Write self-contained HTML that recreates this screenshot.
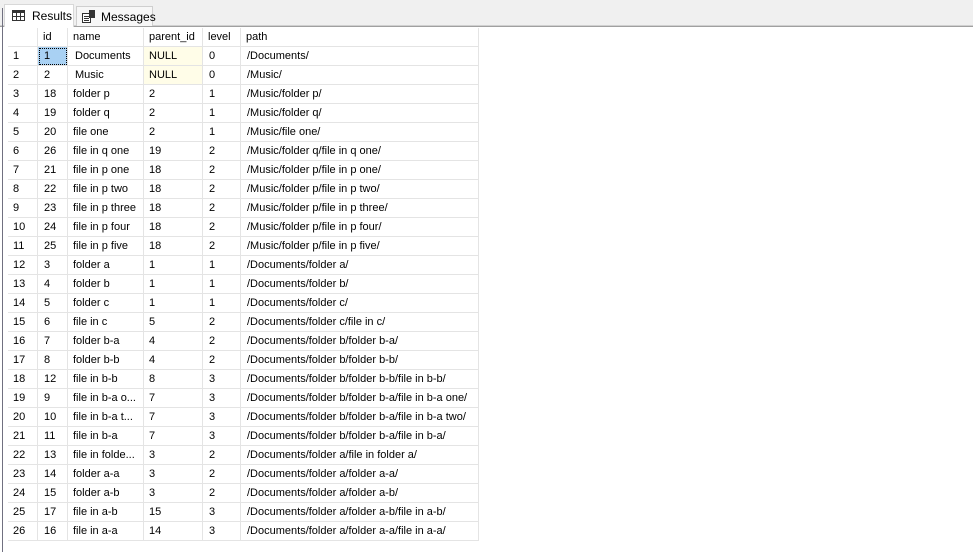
<!DOCTYPE html>
<html><head><style>
body{margin:0;width:973px;height:552px;background:#fff;font-family:"Liberation Sans",sans-serif;font-size:11px;color:#000;position:relative;overflow:hidden}
.strip{position:absolute;left:0;top:0;width:973px;height:25px;background:#f0f0f0}
.l1{position:absolute;left:0;top:25px;width:973px;height:1px;background:#d0d0d0}
.l2{position:absolute;left:0;top:26px;width:973px;height:1px;background:#a0a0a0}
.vl{position:absolute;left:2px;top:8px;width:1px;height:544px;background:#707080}
.tab{position:absolute;box-sizing:border-box;font-size:12px}
.t1{left:4px;top:4px;width:70px;height:23px;background:#fff;border:1px solid #d8d8d8;border-bottom:none}
.t2{left:76px;top:6px;width:77px;height:20px;background:#f7f7f7;border:1px solid #cfcfcf;border-bottom:none}
.c{position:absolute;box-sizing:border-box;border-right:1px solid #e4e4e4;border-bottom:1px solid #e4e4e4;padding-left:5px;line-height:18px;white-space:nowrap;overflow:hidden}
</style></head><body>
<div class="strip"></div><div class="l1"></div><div class="l2"></div><div class="vl"></div>
<div class="tab t1"><svg style="position:absolute;left:7px;top:5px" width="13" height="11"><rect x="0.5" y="0.5" width="12" height="10" fill="none" stroke="#333"/><rect x="0" y="0" width="13" height="3" fill="#333"/><line x1="4.5" y1="0" x2="4.5" y2="11" stroke="#333"/><line x1="8.5" y1="0" x2="8.5" y2="11" stroke="#333"/><line x1="0" y1="6.5" x2="13" y2="6.5" stroke="#333"/></svg><span style="position:absolute;left:27px;top:4px">Results</span></div>
<div class="tab t2"><svg style="position:absolute;left:5px;top:3px" width="14" height="13"><rect x="0.5" y="3.5" width="8" height="9" fill="#fff" stroke="#333"/><line x1="2" y1="6.5" x2="7" y2="6.5" stroke="#333"/><line x1="2" y1="8.5" x2="7" y2="8.5" stroke="#333"/><line x1="2" y1="10.5" x2="7" y2="10.5" stroke="#333"/><rect x="7" y="0" width="6" height="8" fill="#333"/></svg><span style="position:absolute;left:24px;top:3px">Messages</span></div>
<div id="g"></div>
<script>
var X=[8,38,68,144,203,241,479];
var H=["","id","name","parent_id","level","path"];
var D=[[1,"Documents","NULL",0,"/Documents/"],[2,"Music","NULL",0,"/Music/"],[18,"folder p",2,1,"/Music/folder p/"],[19,"folder q",2,1,"/Music/folder q/"],[20,"file one",2,1,"/Music/file one/"],[26,"file in q one",19,2,"/Music/folder q/file in q one/"],[21,"file in p one",18,2,"/Music/folder p/file in p one/"],[22,"file in p two",18,2,"/Music/folder p/file in p two/"],[23,"file in p three",18,2,"/Music/folder p/file in p three/"],[24,"file in p four",18,2,"/Music/folder p/file in p four/"],[25,"file in p five",18,2,"/Music/folder p/file in p five/"],[3,"folder a",1,1,"/Documents/folder a/"],[4,"folder b",1,1,"/Documents/folder b/"],[5,"folder c",1,1,"/Documents/folder c/"],[6,"file in c",5,2,"/Documents/folder c/file in c/"],[7,"folder b-a",4,2,"/Documents/folder b/folder b-a/"],[8,"folder b-b",4,2,"/Documents/folder b/folder b-b/"],[12,"file in b-b",8,3,"/Documents/folder b/folder b-b/file in b-b/"],[9,"file in b-a o...",7,3,"/Documents/folder b/folder b-a/file in b-a one/"],[10,"file in b-a t...",7,3,"/Documents/folder b/folder b-a/file in b-a two/"],[11,"file in b-a",7,3,"/Documents/folder b/folder b-a/file in b-a/"],[13,"file in folde...",3,2,"/Documents/folder a/file in folder a/"],[14,"folder a-a",3,2,"/Documents/folder a/folder a-a/"],[15,"folder a-b",3,2,"/Documents/folder a/folder a-b/"],[17,"file in a-b",15,3,"/Documents/folder a/folder a-b/file in a-b/"],[16,"file in a-a",14,3,"/Documents/folder a/folder a-a/file in a-a/"]];
var h="";
function cell(i,top,ht,txt,st){h+='<div class="c" style="left:'+X[i]+'px;top:'+top+'px;width:'+(X[i+1]-X[i])+'px;height:'+ht+'px;'+(st||'')+'">'+txt+'</div>';}
for(var i=0;i<6;i++)cell(i,28,19,H[i]);
for(var r=0;r<26;r++){var t=47+r*19,d=D[r];
cell(0,t,19,r+1);
cell(1,t,19,d[0],r==0?'background:#a9d1f3;outline:1px dotted #000;outline-offset:-2px;padding-left:6px;':'padding-left:6px;');
cell(2,t,19,d[1],r<2?'padding-left:7px;':'');
cell(3,t,19,d[2],r<2?'background:#fffde8;':'');
cell(4,t,19,d[3],'padding-left:6px;');
cell(5,t,19,d[4],'padding-left:6px;');}
document.getElementById("g").innerHTML=h;
</script>
</body></html>
